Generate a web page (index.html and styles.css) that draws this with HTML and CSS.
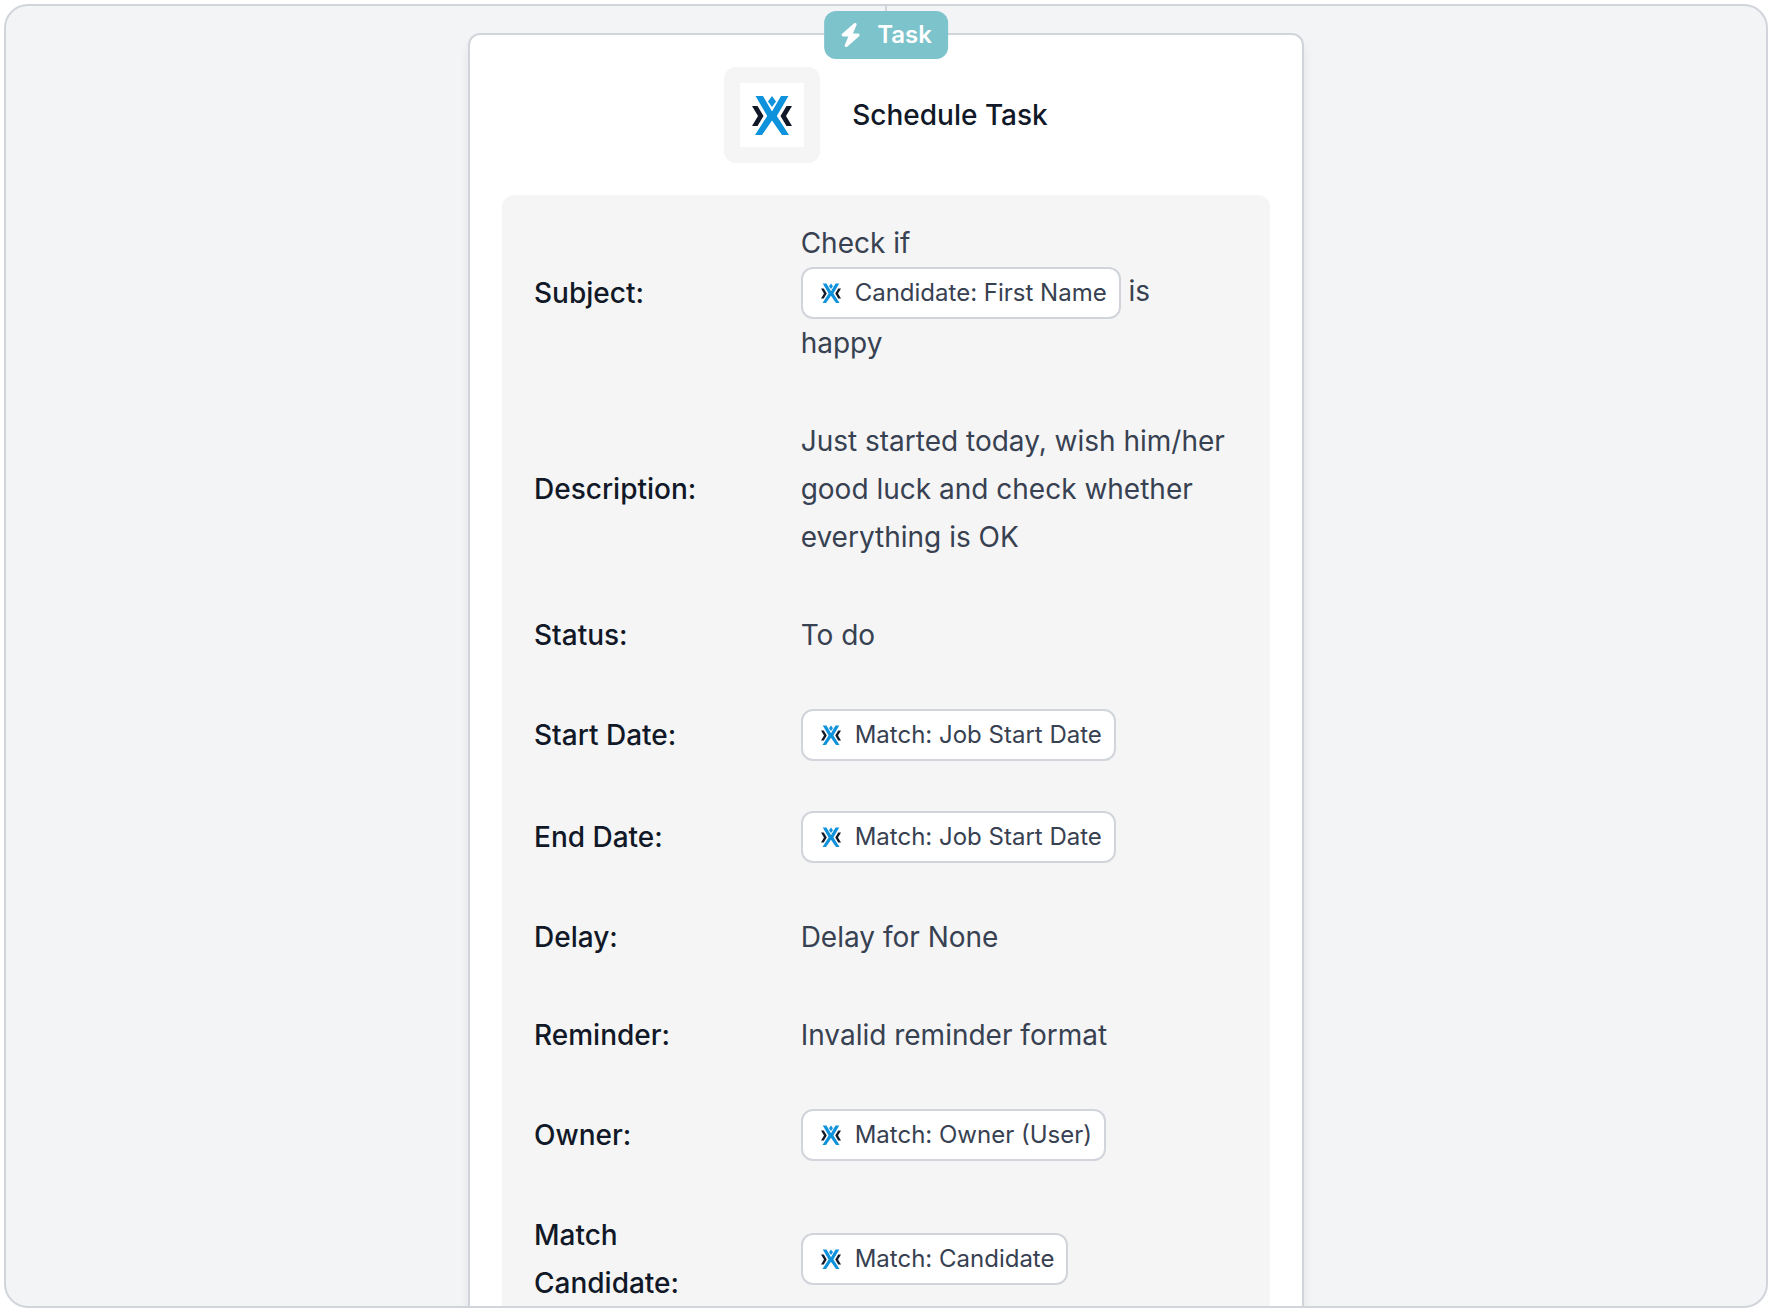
FILE: index.html
```
<!DOCTYPE html>
<html lang="en">
<head>
  <meta charset="utf-8">
  <meta name="viewport" content="width=device-width, initial-scale=1">
  <title>Schedule Task</title>
  <link rel="stylesheet" href="styles.css">
</head>
<body>
  <svg width="0" height="0" class="sprite" aria-hidden="true">
    <symbol id="logo" viewBox="0 0 64 64">
      <path fill="#111827" d="M12 23h5.500L23.500 33l-6 10H12l6-10zM52 23h-5.500L40.500 33l6 10H52l-6-10z"/>
      <path fill="#0f92dc" d="M15.500 13H23l9 15.500L41 13h7.500L36.800 33 49 52h-7L32 37.500 22 52h-7l12.200-19zM32 13l4 5.500-4 5.500-4-5.500z"/>
    </symbol>
  </svg>
  <main class="canvas">
    <article class="card">
      <span class="badge">
        <svg class="badge-icon" viewBox="0 0 448 512" aria-hidden="true"><path fill="currentColor" d="M349.4 44.6c5.900-13.700 1.500-29.700-10.600-38.500s-28.600-8-39.900 1.800l-256 224c-10 8.800-13.600 22.900-8.900 35.300S50.700 288 64 288H175.500L98.600 467.400c-5.900 13.700-1.500 29.700 10.600 38.500s28.600 8 39.900-1.800l256-224c10-8.800 13.600-22.900 8.900-35.300s-16.600-20.700-30-20.700H272.500L349.400 44.600z"/></svg>
        Task
      </span>
      <header class="card-header">
        <div class="logo-frame"><svg class="logo" aria-hidden="true"><use href="#logo"/></svg></div>
        <h1 class="title">Schedule Task</h1>
      </header>
      <dl class="fields">
        <div class="field">
          <dt>Subject:</dt>
          <dd>Check if <span class="chip"><svg class="chip-icon" aria-hidden="true"><use href="#logo"/></svg>Candidate: First Name</span> <span>is</span> <span>happy</span></dd>
        </div>
        <div class="field">
          <dt>Description:</dt>
          <dd>Just started today, wish him/her good luck and check whether everything is OK</dd>
        </div>
        <div class="field">
          <dt>Status:</dt>
          <dd>To do</dd>
        </div>
        <div class="field">
          <dt>Start Date:</dt>
          <dd><span class="chip"><svg class="chip-icon" aria-hidden="true"><use href="#logo"/></svg>Match: Job Start Date</span></dd>
        </div>
        <div class="field">
          <dt>End Date:</dt>
          <dd><span class="chip"><svg class="chip-icon" aria-hidden="true"><use href="#logo"/></svg>Match: Job Start Date</span></dd>
        </div>
        <div class="field">
          <dt>Delay:</dt>
          <dd>Delay for None</dd>
        </div>
        <div class="field">
          <dt>Reminder:</dt>
          <dd>Invalid reminder format</dd>
        </div>
        <div class="field">
          <dt>Owner:</dt>
          <dd><span class="chip"><svg class="chip-icon" aria-hidden="true"><use href="#logo"/></svg>Match: Owner (User)</span></dd>
        </div>
        <div class="field">
          <dt>Match Candidate:</dt>
          <dd><span class="chip"><svg class="chip-icon" aria-hidden="true"><use href="#logo"/></svg>Match: Candidate</span></dd>
        </div>
      </dl>
    </article>
  </main>
</body>
</html>
```
FILE: styles.css
```
* {
  box-sizing: border-box;
}

body {
  margin: 0;
  padding: 4px;
  background: #fff;
  color: #374151;
  font-family: Inter, "Liberation Sans", sans-serif;
  font-size: 28px;
  line-height: 48px;
}

.sprite {
  position: absolute;
}

.canvas {
  height: calc(100vh - 8px);
  padding: 27px 24px 0;
  overflow: hidden;
  background: #f3f4f6;
  border: 2px solid #d1d5db;
  border-radius: 24px;
}

.card {
  position: relative;
  max-width: 836px;
  margin: 0 auto;
  padding: 32px;
  background: #fff;
  border: 2px solid #d1d5db;
  border-radius: 12px;
  box-shadow: 0 8px 12px -2px rgba(0, 0, 0, 0.1);
}

/* connector coming from the previous step */
.card::before {
  content: "";
  position: absolute;
  bottom: 100%;
  left: 50%;
  width: 2px;
  height: 32px;
  margin-left: -1px;
  background: #d1d5db;
}

.badge {
  position: absolute;
  top: 0;
  left: 50%;
  transform: translate(-50%, -50%);
  display: flex;
  align-items: center;
  gap: 16px;
  height: 48px;
  padding: 0 16px;
  background: #7dc3cb;
  border-radius: 12px;
  color: #fff;
  font-size: 24px;
  font-weight: 600;
}

.badge-icon {
  width: 21px;
  height: 24px;
}

.card-header {
  display: flex;
  align-items: center;
  justify-content: center;
  gap: 32px;
  margin-bottom: 32px;
}

.logo-frame {
  padding: 16px;
  background: #f5f5f5;
  border-radius: 12px;
}

.logo {
  display: block;
  width: 64px;
  height: 64px;
  background: #fff;
}

.title {
  margin: 0;
  color: #111827;
  font-size: 28px;
  font-weight: 500;
}

.fields {
  display: flex;
  flex-direction: column;
  gap: 50px;
  margin: 0;
  padding: 24px 32px;
  background: #f5f5f5;
  border-radius: 12px;
}

.field {
  display: grid;
  grid-template-columns: repeat(3, 1fr);
  column-gap: 96px;
  align-items: center;
}

dt {
  color: #111827;
  font-weight: 500;
}

dd {
  grid-column: span 2;
  margin: 0;
}

.chip {
  display: inline-flex;
  align-items: center;
  gap: 8px;
  padding: 0 12px;
  background: #fff;
  border: 2px solid #d1d5db;
  border-radius: 12px;
  font-size: 24px;
  white-space: nowrap;
  vertical-align: top;
}

.chip-icon {
  width: 32px;
  height: 32px;
}
```
